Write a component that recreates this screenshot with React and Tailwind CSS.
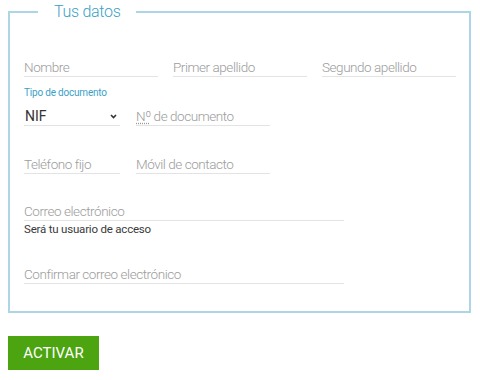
import React from "react";

function Field({ w, children, className = "" }) {
  return (
    <div
      className={`${w} border-b border-[#e3e3e3] leading-[18px] pt-[2px] text-[13.5px] tracking-[-0.45px] font-light text-[#9c9c9c] ${className}`}
    >
      {children}
    </div>
  );
}

export default function App() {
  return (
    <div
      className="w-[480px] h-[380px] bg-white pt-[2px] pl-[8px]"
      style={{ fontFamily: "Roboto, Lato, sans-serif" }}
    >
      <fieldset className="w-[463px] h-[311px] border-2 border-[#acd6e5] pl-[14px]">
        <legend className="ml-[14px] px-[16px] leading-[20px] text-[16px] tracking-[-0.3px] font-light text-[#3b9fc6]">
          Tus datos
        </legend>
        <div className="flex gap-[15px] mt-[34px]">
          <Field w="w-[134px]">Nombre</Field>
          <Field w="w-[134px]">Primer apellido</Field>
          <Field w="w-[134px]">Segundo apellido</Field>
        </div>
        <div className="mt-[10px] text-[10px] tracking-[-0.2px] leading-[12px] text-[#3b9fc6]">
          Tipo de documento
        </div>
        <div className="flex gap-[16px] mt-[6px]">
          <div className="w-[96px] border-b border-[#e3e3e3] leading-[18px] pt-[2px] text-[14px] text-[#333] flex items-center justify-between pl-[1px] pr-[3px]">
            <span>NIF</span>
            <svg width="7" height="5" viewBox="0 0 7 5">
              <path d="M1 1l2.5 2.5L6 1" fill="none" stroke="#333" strokeWidth="1.6" />
            </svg>
          </div>
          <Field w="w-[134px]">
            <span className="underline decoration-dotted decoration-[#999] underline-offset-2">Nº</span> de documento
          </Field>
        </div>
        <div className="flex gap-[16px] mt-[27px]">
          <Field w="w-[96px]">Teléfono fijo</Field>
          <Field w="w-[134px]">Móvil de contacto</Field>
        </div>
        <Field w="w-[320px]" className="mt-[26px]">Correo electrónico</Field>
        <div className="text-[11.5px] tracking-[-0.2px] leading-[14px] text-[#3a3a3a] mt-[1px]">
          Será tu usuario de acceso
        </div>
        <Field w="w-[320px]" className="mt-[27px]">Confirmar correo electrónico</Field>
      </fieldset>
      <button className="mt-[23px] w-[91px] h-[34px] bg-[#4ba410] text-white text-[15px] leading-[34px]">
        ACTIVAR
      </button>
    </div>
  );
}
